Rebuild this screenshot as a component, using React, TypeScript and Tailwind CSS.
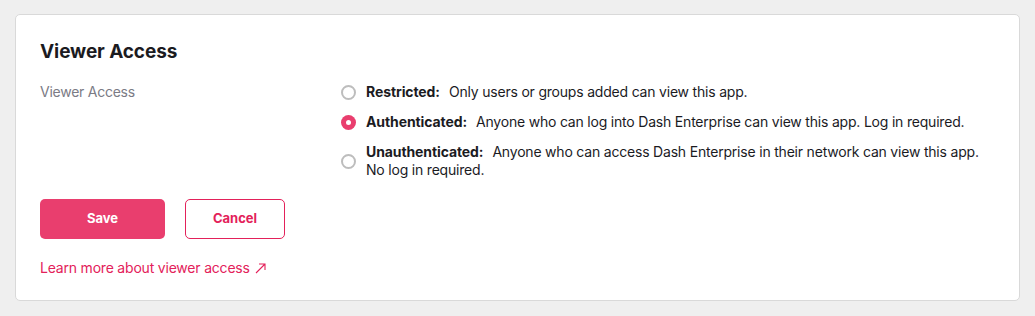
import React, { useState } from 'react';

const options = [
  {
    id: 'restricted',
    title: 'Restricted:',
    text: 'Only users or groups added can view this app.',
  },
  {
    id: 'authenticated',
    title: 'Authenticated:',
    text: 'Anyone who can log into Dash Enterprise can view this app. Log in required.',
  },
  {
    id: 'unauthenticated',
    title: 'Unauthenticated:',
    text: 'Anyone who can access Dash Enterprise in their network can view this app.',
    extra: 'No log in required.',
  },
];

const App: React.FC = () => {
  const [access, setAccess] = useState('authenticated');

  return (
    <div
      className="min-h-screen bg-[#efefef] pt-[14px] px-[15px]"
      style={{ fontFamily: 'Inter, "Liberation Sans", sans-serif' }}
    >
      <div className="h-[287px] bg-white border border-[#d9d9d9] rounded-[5px] pt-[25px] px-[24px]">
        <h1 className="text-[19px] leading-6 font-bold text-[#1b1b1f] tracking-[-0.1px]">Viewer Access</h1>

        <div className="flex mt-[19px]">
          <div className="w-[301px] text-[14px] leading-[18px] text-[#7b7b85] tracking-[-0.25px]">Viewer Access</div>
          <div className="flex flex-col gap-3">
            {options.map(opt => {
              const checked = access === opt.id;
              return (
                <label
                  key={opt.id}
                  className="flex items-center cursor-pointer"
                  onClick={() => setAccess(opt.id)}
                >
                  <span
                    className={`w-[15px] h-[15px] rounded-full flex items-center justify-center shrink-0 mr-[10px] ${
                      checked ? 'bg-[#e93e6e]' : 'border-2 border-[#bdbdbd] bg-white'
                    }`}
                  >
                    {checked && <span className="w-[5px] h-[5px] rounded-full bg-white" />}
                  </span>
                  <span className="text-[14px] leading-[18px] text-[#1b1b1f] tracking-[-0.2px]">
                    <span className="font-bold tracking-[-0.1px]">{opt.title}</span>
                    <span className="ml-[9px]">{opt.text}</span>
                    {opt.extra && <span className="block">{opt.extra}</span>}
                  </span>
                </label>
              );
            })}
          </div>
        </div>

        <div className="flex gap-5 mt-5">
          <button className="w-[125px] h-10 rounded-[5px] bg-[#e93e6e] text-white text-[13px] font-bold">
            Save
          </button>
          <button className="w-[100px] h-10 rounded-[5px] border border-[#e3215a] bg-white text-[#e3215a] text-[13px] font-bold">
            Cancel
          </button>
        </div>

        <a href="#" className="mt-[19px] inline-flex items-center text-[14px] leading-5 text-[#e3215a] tracking-[-0.2px]">
          Learn more about viewer access
          <svg className="ml-[5px] w-[11px] h-[11px]" viewBox="0 0 11 11" fill="none" stroke="currentColor" strokeWidth="1.1">
            <path d="M1 10 L10 1 M4 1 H10 V7" />
          </svg>
        </a>
      </div>
    </div>
  );
};

export default App;
